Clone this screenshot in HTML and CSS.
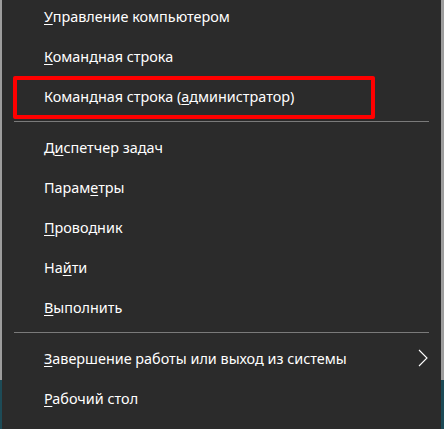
FILE: index.html
```html
<!DOCTYPE html>
<html lang="ru">
<head>
  <meta charset="UTF-8">
  <meta name="viewport" content="width=device-width, initial-scale=1.0">
  <title>Меню Win+X</title>
  <link rel="stylesheet" href="styles.css">
</head>
<body>
  <div class="menu">
    <div class="item"><span><u>У</u>правление компьютером</span></div>
    <div class="item"><span><u>К</u>омандная строка</span></div>
    <div class="item marked"><span>Командная строка (<u>а</u>дминистратор)</span></div>
    <div class="separator"></div>
    <div class="item"><span>Д<u>и</u>спетчер задач</span></div>
    <div class="item"><span>Парам<u>е</u>тры</span></div>
    <div class="item"><span><u>П</u>роводник</span></div>
    <div class="item"><span>На<u>й</u>ти</span></div>
    <div class="item"><span><u>В</u>ыполнить</span></div>
    <div class="separator"></div>
    <div class="item">
      <span><u>З</u>авершение работы или выход из системы</span>
      <svg class="chevron" width="10" height="18" viewBox="0 0 10 18">
        <path d="M1 1 L9 9 L1 17" fill="none" stroke="#fff" stroke-width="1.1"/>
      </svg>
    </div>
    <div class="item"><span><u>Р</u>абочий стол</span></div>
  </div>
</body>
</html>
```

FILE: styles.css
```css
body {
  margin: 0;
  padding: 0 3px 0 2px;
  height: 429px;
  overflow: hidden;
  background: linear-gradient(to bottom, #9d9d9d 380px, #1d4b57 380px);
  font-family: 'Noto Sans', 'Open Sans', sans-serif;
  font-size: 14.4px;
  color: #fff;
}
.menu {
  background: #2b2b2b;
  height: 100%;
  padding-top: 1px;
  box-sizing: border-box;
}
.menu > :first-child {
  margin-top: -5px;
}
.item {
  height: 40px;
  display: flex;
  align-items: center;
  justify-content: space-between;
  padding: 0 13px 0 42px;
  position: relative;
  white-space: nowrap;
}
.item u {
  text-underline-offset: 2px;
}
.marked::after {
  content: '';
  position: absolute;
  top: 0;
  left: 11px;
  width: 354px;
  height: 35px;
  border: 4px solid #ff0000;
  border-radius: 2px;
}
.separator {
  height: 1px;
  margin: 5px 12px 5px;
  background: #7a7a7a;
}
.chevron {
  display: block;
}
```
